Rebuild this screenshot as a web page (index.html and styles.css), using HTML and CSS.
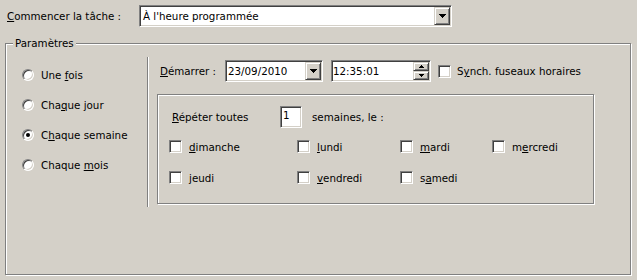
FILE: index.html
```html
<!DOCTYPE html>
<html lang="fr">
<head>
    <meta charset="UTF-8">
    <title>Planification de la tâche</title>
    <link rel="stylesheet" href="styles.css">
</head>
<body>

    <div class="dialog">
        <div class="task-row">
            <label class="task-label"><u>C</u>ommencer la tâche :</label>
            <div class="combo task-combo">
                <span class="combo-text">À l'heure programmée</span>
                <span class="drop-btn"><svg width="7" height="4" viewBox="0 0 7 4"><path d="M0 0h7v1h-1v1h-1v1h-1v1h-1v-1h-1v-1h-1v-1h-1z"/></svg></span>
            </div>
        </div>

        <div class="group">
            <span class="group-title">Paramètres</span>
            <div class="group-body">
                <!-- fréquence -->
                <div class="freq-list">
                    <div class="radio-row"><span class="radio"></span><span>Une <u>f</u>ois</span></div>
                    <div class="radio-row"><span class="radio"></span><span>Cha<u>q</u>ue jour</span></div>
                    <div class="radio-row"><span class="radio checked"></span><span>C<u>h</u>aque semaine</span></div>
                    <div class="radio-row"><span class="radio"></span><span>Chaque <u>m</u>ois</span></div>
                </div>
                <div class="sep"></div>

                <div class="schedule">
                    <div class="start-row">
                        <span class="start-label"><u>D</u>émarrer :</span>
                        <div class="combo date-combo">
                            <span class="combo-text">23/09/2010</span>
                            <span class="drop-btn"><svg width="7" height="4" viewBox="0 0 7 4"><path d="M0 0h7v1h-1v1h-1v1h-1v1h-1v-1h-1v-1h-1v-1h-1z"/></svg></span>
                        </div>
                        <div class="combo time-box">
                            <span class="combo-text">12:35:01</span>
                            <span class="spin">
                                <span class="spin-btn"><svg width="5" height="3" viewBox="0 0 5 3"><path d="M2 0h1v1h1v1h1v1h-5v-1h1v-1h1z"/></svg></span>
                                <span class="spin-btn"><svg width="5" height="3" viewBox="0 0 5 3"><path d="M0 0h5v1h-1v1h-1v1h-1v-1h-1v-1h-1z"/></svg></span>
                            </span>
                        </div>
                        <span class="check-box sync-box"></span>
                        <span class="sync-label">S<u>y</u>nch. fuseaux horaires</span>
                    </div>

                    <div class="week-box">
                        <div class="repeat-row">
                            <span class="repeat-label"><u>R</u>épéter toutes</span>
                            <span class="num-input">1</span>
                            <span class="repeat-after">semaines, le :</span>
                        </div>
                        <div class="days">
                            <div class="day"><span class="check-box"></span><span><u>d</u>imanche</span></div>
                            <div class="day"><span class="check-box"></span><span><u>l</u>undi</span></div>
                            <div class="day"><span class="check-box"></span><span><u>m</u>ardi</span></div>
                            <div class="day"><span class="check-box"></span><span>m<u>e</u>rcredi</span></div>
                            <div class="day"><span class="check-box"></span><span><u>j</u>eudi</span></div>
                            <div class="day"><span class="check-box"></span><span><u>v</u>endredi</span></div>
                            <div class="day"><span class="check-box"></span><span>s<u>a</u>medi</span></div>
                        </div>
                    </div>
                </div>
            </div>
        </div>
    </div>

</body>
</html>
```

FILE: styles.css
```css
body {
    margin: 0;
    background-color: #d4d0c8;
    font-family: "DejaVu Sans", sans-serif;
    font-size: 10.3px;
    color: #000;
}

.dialog {
    width: 637px;
    height: 280px;
    padding-top: 5px;
    box-sizing: border-box;
    overflow: hidden;
}

u {
    text-underline-offset: 1px;
}

/* ligne du haut */
.task-row {
    display: flex;
    align-items: center;
    height: 22px;
}

.task-label {
    width: 139px;
    padding-left: 7px;
    box-sizing: border-box;
}

/* champs creux façon Windows classique */
.combo {
    display: flex;
    height: 22px;
    padding: 1px;
    box-sizing: border-box;
    background-color: #fff;
    border: 1px solid;
    border-color: #808080 #fff #fff #808080;
    box-shadow: inset 1px 1px 0 #404040, inset -1px -1px 0 #d4d0c8;
}

.combo-text {
    flex: 1;
    padding-left: 1px;
    line-height: 18px;
    white-space: nowrap;
}

.task-combo {
    width: 313px;
}

.task-combo .combo-text {
    padding-left: 2px;
}

.drop-btn,
.spin-btn {
    display: flex;
    align-items: center;
    justify-content: center;
    box-sizing: border-box;
    background-color: #d4d0c8;
    border: 1px solid;
    border-color: #d4d0c8 #404040 #404040 #d4d0c8;
    box-shadow: inset 1px 1px 0 #fff, inset -1px -1px 0 #808080;
}

.drop-btn {
    width: 16px;
    height: 18px;
}

.spin {
    display: flex;
    flex-direction: column;
    width: 16px;
}

.spin-btn {
    height: 9px;
}

/* groupe Paramètres */
.group {
    position: relative;
    margin: 16px 0 0 5px;
    width: 626px;
    height: 232px;
    box-sizing: border-box;
    border: 1px solid #808080;
    box-shadow: inset 1px 1px 0 #fff, 1px 1px 0 #fff;
}

.group-title {
    position: absolute;
    top: -8px;
    left: 7px;
    padding: 0 2px;
    line-height: 14px;
    background-color: #d4d0c8;
}

.group-body {
    display: flex;
    padding-top: 13px;
}

.freq-list {
    width: 141px;
    padding: 3px 0 0 16px;
    box-sizing: border-box;
}

.radio-row {
    display: flex;
    align-items: center;
    gap: 7px;
    height: 30px;
}

.radio {
    display: flex;
    align-items: center;
    justify-content: center;
    width: 12px;
    height: 12px;
    box-sizing: border-box;
    border-radius: 50%;
    background-color: #fff;
    border: 1px solid;
    border-color: #808080 #fff #fff #808080;
    box-shadow: inset 1px 1px 0 #404040, inset -1px -1px 0 #d4d0c8;
}

.radio.checked::after {
    content: "";
    width: 4px;
    height: 4px;
    border-radius: 50%;
    background-color: #000;
}

.sep {
    height: 150px;
    border-left: 1px solid #808080;
    border-right: 1px solid #fff;
}

.schedule {
    padding: 3px 0 0 8px;
}

.start-row {
    display: flex;
    align-items: center;
    height: 22px;
    padding-left: 3px;
}

.start-label {
    width: 65px;
}

.date-combo {
    width: 98px;
}

.time-box {
    width: 100px;
    margin-left: 8px;
}

.time-box .combo-text {
    padding-left: 0;
}

.check-box {
    width: 13px;
    height: 13px;
    flex: none;
    box-sizing: border-box;
    background-color: #fff;
    border: 1px solid;
    border-color: #808080 #fff #fff #808080;
    box-shadow: inset 1px 1px 0 #404040, inset -1px -1px 0 #d4d0c8;
}

.sync-box {
    margin-left: 7px;
}

.sync-label {
    margin-left: 6px;
}

/* cadre des jours */
.week-box {
    margin-top: 12px;
    width: 437px;
    height: 110px;
    padding: 11px 0 0 11px;
    box-sizing: border-box;
    border: 1px solid #808080;
    box-shadow: inset 1px 1px 0 #fff, 1px 1px 0 #fff;
}

.repeat-row {
    display: flex;
    align-items: center;
    height: 22px;
    padding-left: 3px;
}

.repeat-label {
    width: 108px;
}

.num-input {
    width: 22px;
    height: 22px;
    padding: 1px 0 0 2px;
    box-sizing: border-box;
    line-height: 14px;
    background-color: #fff;
    border: 1px solid;
    border-color: #808080 #fff #fff #808080;
    box-shadow: inset 1px 1px 0 #404040, inset -1px -1px 0 #d4d0c8;
}

.repeat-after {
    margin-left: 10px;
}

.days {
    display: grid;
    grid-template-columns: 128px 103px 92px auto;
    row-gap: 18px;
    margin-top: 12px;
}

.day {
    display: flex;
    align-items: center;
    gap: 7px;
    height: 13px;
}
```
